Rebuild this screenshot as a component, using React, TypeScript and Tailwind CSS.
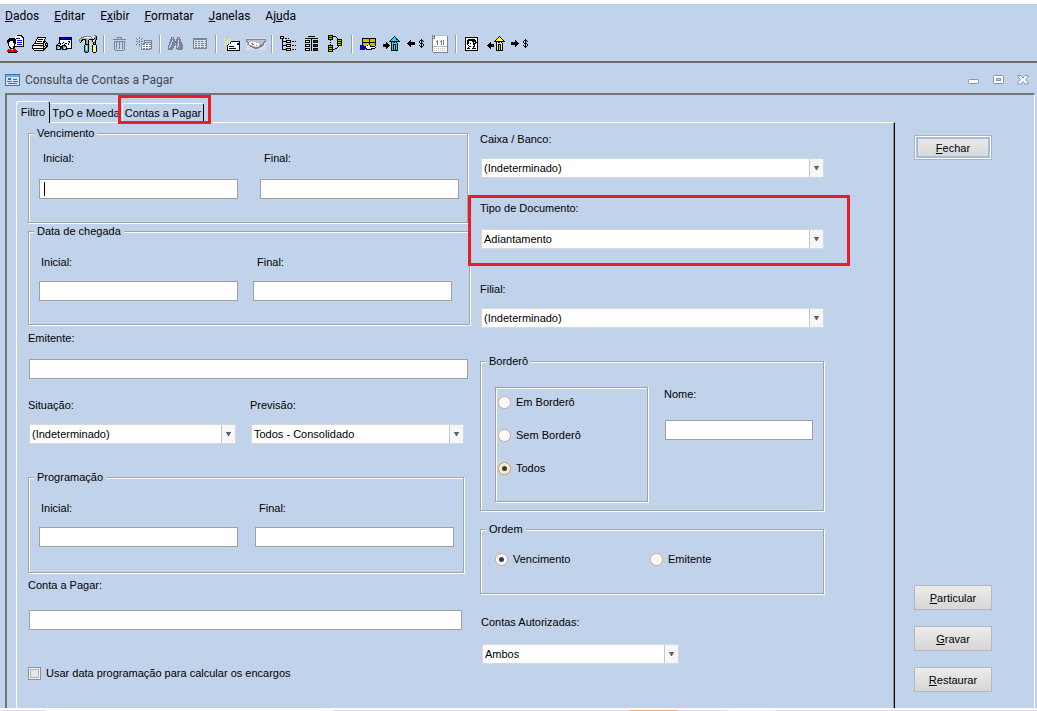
import { useState } from 'react';
import type { ReactNode } from 'react';

const palette: Record<string, string> = {
  k: '#000000',
  w: '#ffffff',
  g: '#7b8494',
  s: '#c0c0c0',
  r: '#e60000',
  m: '#a00000',
  b: '#0000e6',
  c: '#20d8e8',
  t: '#009aa0',
  y: '#ffff30',
  o: '#c8c400',
  l: '#d4deec',
};

// one character per pixel, '.' is transparent
const icons: Record<string, string[]> = {
  user: [
    '..........wkkkkk...',
    '.........wwwwwwkk..',
    '.........wwwwwwwkk.',
    '...kkkkkkwbbbbwwwk.',
    '..kkkkkkkkwwwwwwwk.',
    '.kkkkkkkkkwbbbbbwk.',
    '.kkkwwwkkkwwwwwwwk.',
    '.kkwwwwkkkwbbbbbwk.',
    '..kwwwwwkkwwwwwwwk.',
    '..kwwwwwkwwbbbbbwk.',
    '..kwwwwwkwwwwwwwwk.',
    '...kwwwkkkkkkkkkkk.',
    '...kkwwkk..........',
    '....kkkkr..........',
    '..rrrwwrrr.........',
    '.rrrrrrrrrr........',
    '.rrrrrrrrrrk.......',
    '..kkkkkkkkk........',
  ],
  printer: [
    '.....kkkkkkkkk..',
    '.....kwwwwwwwk..',
    '....kwkkkkkwk...',
    '....kwwwwwwwk...',
    '...kwkkkkkwkkk..',
    '...kwwwwwwwkkwk.',
    '..kkkkkkkkkkwkkk',
    '.kwwwwwwwwwkwkwk',
    'kkkkkkkkkkkkwkkk',
    'kwwwwwwwoowkkwkk',
    'kwwwwwwwwwwkwkk.',
    'kkkkkkkkkkkkkk..',
    '.kwwwwwwwwwkk...',
    '..kkkkkkkkkk....',
  ],
  preview: [
    '...kkkkkkkkkkkkk',
    '...kbbbbbbbbbbbk',
    '...kkkkkkkkkkkkk',
    '...kwwwwwwwwwwwk',
    '...kwwwwwwwwkkwk',
    '...kwwwkwwwwwkwk',
    '..kkkwkwwkkwkwwk',
    '.k.wkwwwkwwwkwwk',
    'kkkkwwkkkkwwwwwk',
    'kcckkkkcckkwwwwk',
    'kccwkkkccwkwwwwk',
    'kcwckkkcwckkkkkk',
    'kkkkk.kkkkk.....',
  ],
  tools: [
    '..............sgg.',
    '....gggggggg.swwgk',
    '..gggwwwwwwwgwwsgk',
    '.ggssssssssssswkgk',
    'gsskkkkgsskkkkkggk',
    'gskk..kgsk...kwwk.',
    'gsk...kgsk...kwgk.',
    '.k....kgsk....kgk.',
    '......kgsk....kgk.',
    '......kkkk....kkk.',
    '.....kccck...kyyyk',
    '.....kcwck...kywyk',
    '.....kcwck...kywyk',
    '.....kcwck...kywyk',
    '.....kcwck...kywyk',
    '.....kccck...kyyyk',
    '.....ktttk...kyyyk',
    '......kkk.....kkk.',
  ],
  trash: [
    '....ggggg....',
    '....g...g....',
    'ggggggggggggg',
    '.............',
    '.ggggggggggg.',
    '.g.g..g..g.g.',
    '.g.g..g..g.g.',
    '.g.g..g..g.g.',
    '.g.g..g..g.g.',
    '.g.g..g..g.g.',
    '.g.g..g..g.g.',
    '.g.g..g..g.g.',
    '.g.........g.',
    '..ggggggggg..',
  ],
  newRecord: [
    '...g............',
    'g..g..g.........',
    '.g...g..........',
    '...g....gggggggg',
    'gg.g.gg.g......g',
    '...g....gggggggg',
    '.g...g.gg......g',
    'g..g..gggwggwggg',
    '...g.gwwwwwwwwwg',
    '.....gwggwggwggg',
    '.....gwwwwwwwwwg',
    '.....gwggwggwggg',
    '.....gggggggggg.',
  ],
  find: [
    '...ggg...ggg....',
    '...g.g...g.g....',
    '..ggggg.ggggg...',
    '..gg.gg.gg.gg...',
    '..gg.ggggg.gg...',
    '.gg.gggggg.ggg..',
    '.gg.ggg.gg.ggg..',
    '.g..ggggg..gggg.',
    'gg.gggg.gg.gggg.',
    'g..ggg..g..gggg.',
    'g.gggg..g.ggggg.',
    'ggggg...ggggggg.',
    'ggggg....ggggg..',
  ],
  grid: [
    'gggggggggggggg',
    'gggggggggggggg',
    'gllllllllllllg',
    'glgglgglggllgg',
    'gllllllllllllg',
    'glgglgglggglgg',
    'gllllllllllllg',
    'glgglgglggglgg',
    'gllllllllllllg',
    'glgglgglggglgg',
    'gggggggggggggg',
  ],
  newCard: [
    '...o............',
    'y..y..y.........',
    '.y...y..........',
    '...y............',
    'yy.y.yykkkkkkkkk',
    '...y..kwwwwwwwwk',
    '.y...ykwwwwwwbbk',
    'y..ykwwwwwwwwbbk',
    '...kwwwwwwwwwwwk',
    '...kwkkkkkwwwwwk',
    '...kwwwwwwwwwwwk',
    '...kwkkkkkkkwwwk',
    '...kwwwwwwwwwwwk',
    '...kkkkkkkkkkkkk',
  ],
  handshake: [
    'llllllllllllllllllll',
    'gggggggggggggggggggg',
    'gssssssssssssssssssg',
    'ggssssssssssssssssgg',
    'lggwwwwwwwsssssssggl',
    'llgwwggwwwwwwssssgll',
    'lggwwwggwwwwwssgggll',
    'lllggswwwwgwwsgggsll',
    'llllgggsswwssgggslll',
    'llllllggggggggslllll',
    'llllllllggggslllllll',
    'llllllllllllllllllll',
  ],
  tree: [
    'kkkk............',
    'kyyk............',
    'kkkk.kk.k.......',
    '..k.............',
    '..k...kkkkk.....',
    '..kkkkkyyyk.kk.k',
    '..k...kkkkk.....',
    '..k.............',
    '..k...kkkkk.....',
    '..kkkkkyyyk.kk.k',
    '..k...kkkkk.....',
    '..k.............',
    '..k...kkkkk.....',
    '..kkkkkyyyk.kk.k',
    '......kkkkk.....',
  ],
  org: [
    '...kkkkkkk...',
    '.............',
    'kkkkkkkkkkkkk',
    '......k......',
    'kkkkk.k.kkkkk',
    'kyyyk.k.kmmmk',
    'kkkkk.k.kkkkk',
    '......k......',
    'kkkkk.k.kkkkk',
    'kyyyk.k.kmmmk',
    'kkkkk.k.kkkkk',
    '......k......',
    'kkkkk.k.kkkkk',
    'kyyyk.k.kmmmk',
    'kkkkk.k.kkkkk',
  ],
  cycle: [
    'kkkkk..........',
    'koookkkk.......',
    'kkkkk...k......',
    'koook....k.....',
    'kkkkk....kkkkk.',
    '..k......koook.',
    '.........kkkkk.',
    '..k......koook.',
    '.........kkkkk.',
    '..k......koook.',
    'kkkkk....kkkkk.',
    'koook.....k....',
    'kkkkk....k.....',
    'koook..kk......',
    'kkkkkkk........',
    'koook..........',
    'kkkkk..........',
  ],
  box: [
    '..kkkkkkkkkkkkkk',
    '..kooooookoooook',
    '..kooooookoooook',
    '..kooooookoooook',
    '..kkkkkkkkkkkkkk',
    '..kooooookoooook',
    '..kooooookoooook',
    'bbbboookwwkooook',
    'bbbbbkwwwwkkkkk.',
    'bbbbbkwwwwwwwwwk',
    'bbbbbkkwwwwkkkk.',
    'bbbbb.kkkkkk....',
  ],
  houseIn: [
    '...........k.....',
    '..........kck....',
    '.........kccck...',
    '........kcccckk..',
    '.......kccccccck.',
    '......kkkkkkkkkkk',
    '...k....kcbbck...',
    '...kk...kccccck..',
    'kkkkkk..kckkkck..',
    'kkkkkkk.kckckck..',
    'kkkkkk..kckckck..',
    '...kk...kckckck..',
    '...k....kckckck..',
    '........kckckck..',
    '........kkkkkkk..',
  ],
  dollarOut: [
    '..............k..',
    '...k.........kkk.',
    '..kk........k.k.k',
    '.kkkkkkk....k.k..',
    'kkkkkkkk.....kkk.',
    '.kkkkkkk......k.k',
    '..kk........k.k.k',
    '...k.........kkk.',
    '..............k..',
  ],
  calendar: [
    'g.gssssssssssss.',
    'gggwwwwwwwwwwwwg',
    'gwgwwwwwwwwwwwwg',
    'gggwwwwwwwwwwwwg',
    'gwwwwwwwwwwwwwwg',
    'gwwwwgwwwgwgwwwg',
    'gwwwggwwggwgwwwg',
    'gwwwwgwwwgwgwwwg',
    'gwwwwgwwwgwgwwwg',
    'gwwwwgwwwgwgwwwg',
    'gwwwwwwwwwwwwwwg',
    'gssssssssssssssg',
    'gwwwwwwwwwwwwwwg',
    'gwswswswswswswwg',
    'gwwwwwwwwwwwwwwg',
    'gwswswswswswswwg',
    'gwwwwwwwwwwwwwwg',
    '.ggggggggggggggg',
  ],
  portrait: [
    'kkkkkkkkkkkkk',
    'kwwwwwwwwwwwk',
    'kwwkkkkkkkwwk',
    'kwkkkkkkkkkwk',
    'kwkkwwwkkkkwk',
    'kwkkwwwwkwkkk',
    'kwkkwkwwkkkwk',
    'kwkwwwwwkkwwk',
    'kwwkwwwwwkwwk',
    'kwwwkkwwkkwwk',
    'kwwkwwwwkwwwk',
    'kwkkkwwkkkkwk',
    'kwwwwwwwwwwwk',
    'kkkkkkkkkkkkk',
  ],
  houseOut: [
    '............k.....',
    '...........kyk....',
    '..........kyyyk...',
    '.........kyyyyyk..',
    '........kyyyyyyyk.',
    '.......kkkkkkkkkkk',
    '...k.....kybbyk...',
    '..kk.....kyyyyyk..',
    '.kkkkkk..kykkkyk..',
    'kkkkkkk..kykokyk..',
    '.kkkkkk..kykokyk..',
    '..kk.....kykokyk..',
    '...k.....kykokyk..',
    '.........kykokyk..',
    '.........kkkkkkk..',
  ],
  dollarIn: [
    '..............k..',
    '....k........kkk.',
    '....kk......k.k.k',
    'kkkkkkk.....k.k..',
    'kkkkkkkk.....kkk.',
    'kkkkkkk.......k.k',
    '....kk......k.k.k',
    '....k........kkk.',
    '..............k..',
  ],
};

const toolbarGroups = [
  ['user', 'printer', 'preview', 'tools'],
  ['trash', 'newRecord'],
  ['find', 'grid'],
  ['newCard', 'handshake'],
  ['tree', 'org', 'cycle'],
  ['box', 'houseIn', 'dollarOut', 'calendar'],
  ['portrait', 'houseOut', 'dollarIn'],
];

const menus = [
  ['', 'D', 'ados'],
  ['', 'E', 'ditar'],
  ['E', 'x', 'ibir'],
  ['', 'F', 'ormatar'],
  ['', 'J', 'anelas'],
  ['Aj', 'u', 'da'],
];

// sizes are rounded up to even numbers so a centred icon stays on whole pixels
function PixelIcon({ name }: { name: string }) {
  const rows = icons[name];
  const width = rows[0].length + (rows[0].length % 2);
  const height = rows.length + (rows.length % 2);
  return (
    <svg width={width} height={height} viewBox={`0 0 ${width} ${height}`} shapeRendering="crispEdges" className="shrink-0" aria-hidden="true">
      {rows.map((row, y) =>
        row.split('').map((c, x) =>
          palette[c] ? <rect key={`${x}-${y}`} x={x} y={y} width="1" height="1" fill={palette[c]} /> : null
        )
      )}
    </svg>
  );
}

function Group({ title, className, children }: { title: string; className: string; children: ReactNode }) {
  return (
    <fieldset className={`min-w-0 border border-[#a0a5aa] shadow-[1px_1px_0_#fff,inset_1px_1px_0_#fff] ${className}`}>
      <legend className="ml-[5px] bg-[#c1d3ea] px-[3px] leading-[13px]">{title}</legend>
      {children}
    </fieldset>
  );
}

function TextField({ id, label, className = '', gap = 'mt-3', indent = '', caret = false }: {
  id: string;
  label: string;
  className?: string;
  gap?: string;
  indent?: string;
  caret?: boolean;
}) {
  return (
    <div className={`flex flex-col ${className}`}>
      <label htmlFor={id} className={`leading-[14px] ${indent}`}>{label}</label>
      <div className={`relative ${gap}`}>
        <input id={id} type="text" className="block h-5 w-full border border-[#a0a0a0] bg-white px-1 outline-none" />
        {caret && <span className="absolute top-[3px] left-[5px] h-[14px] w-px bg-black" />}
      </div>
    </div>
  );
}

function SelectField({ id, label, value, className = '', gap = 'mt-3' }: {
  id: string;
  label: string;
  value: string;
  className?: string;
  gap?: string;
}) {
  return (
    <div className={`flex flex-col ${className}`}>
      <label htmlFor={id} className="leading-[14px]">{label}</label>
      <div className={`relative ml-px ${gap}`}>
        <select id={id} defaultValue={value} className="block h-5 w-full appearance-none border border-[#d4d8dc] bg-white px-[2px] outline-none">
          <option>{value}</option>
        </select>
        <span className="pointer-events-none absolute inset-y-px right-px flex w-[14px] items-center justify-center border-l border-[#c4c8cc] bg-[#f6f7f9]">
          <svg width="5" height="4" viewBox="0 0 5 4" aria-hidden="true">
            <path d="M0 0H5V1H4.500L3 4H2L.5 1H0Z" fill="#606060" />
          </svg>
        </span>
      </div>
    </div>
  );
}

function Radio({ name, label, checked, onChange, hot = false }: {
  name: string;
  label: string;
  checked: boolean;
  onChange: () => void;
  hot?: boolean;
}) {
  const tone = hot && checked ? 'border-[#c09850] bg-[#fbe6b4]' : 'border-[#c8aaa0] bg-[#fff8f4]';
  return (
    <label className="flex h-[13px] items-center gap-[5px]">
      <span className="relative flex size-[13px]">
        <input
          type="radio"
          name={name}
          checked={checked}
          onChange={onChange}
          className={`size-[13px] appearance-none rounded-full border ${tone} shadow-[inset_0_0_0_1px_#fff]`}
        />
        {checked && <span className="pointer-events-none absolute inset-[4px] rounded-full bg-[#2c4064]" />}
      </span>
      {label}
    </label>
  );
}

function PushButton({ hotkey, rest, focused = false }: { hotkey: string; rest: string; focused?: boolean }) {
  const frame = focused
    ? 'border-[#aeb4ba] shadow-[inset_0_0_0_1px_#fff,inset_0_0_0_3px_#9fbce6]'
    : 'border-[#b4b8bc]';
  return (
    <button type="button" className={`h-[25px] w-[78px] border bg-linear-to-b from-[#ececec] to-[#d6d6d6] pt-px leading-[14px] ${frame}`}>
      <u>{hotkey}</u>{rest}
    </button>
  );
}

function WindowControls() {
  return (
    <div className="flex items-center gap-[13px]">
      <button type="button" aria-label="Minimizar">
        <svg width="12" height="10" viewBox="0 0 12 10"><rect x=".5" y="4.5" width="10" height="4" rx="1" fill="#fff" stroke="#7f96b4" /></svg>
      </button>
      <button type="button" aria-label="Restaurar janela">
        <svg width="11" height="10" viewBox="0 0 11 10">
          <rect x=".5" y=".5" width="10" height="8" rx="1" fill="#fff" stroke="#7f96b4" />
          <rect x="3.5" y="3.5" width="4" height="2" fill="#c1d3ea" stroke="#7f96b4" />
        </svg>
      </button>
      <button type="button" aria-label="Fechar janela">
        <svg width="12" height="10" viewBox="0 0 12 10">
          <path d="M1 .5H4L6 3 8 .5H11V2L8.500 4.500 11 7.500V9H8L6 6.500 4 9H1V7.500L3.500 4.500 1 2Z" fill="#fff" stroke="#7f96b4" />
        </svg>
      </button>
    </div>
  );
}

export default function App() {
  const [bordero, setBordero] = useState('Todos');
  const [ordem, setOrdem] = useState('Vencimento');

  return (
    <div className="flex min-h-screen flex-col bg-[#c1d3ea] font-['Liberation_Sans',Arial,sans-serif] text-[11px] text-black">
      {/* Menu */}
      <nav className="flex h-7 items-center gap-[15px] border-t-4 border-white pl-[5px] font-[Roboto,'Segoe_UI',sans-serif] text-[12px]">
        {menus.map(([before, key, after]) => (
          <button key={after} type="button">{before}<u>{key}</u>{after}</button>
        ))}
      </nav>

      {/* Toolbar */}
      <div className="flex h-8 items-center pl-1">
        {toolbarGroups.map((group, i) => (
          <div key={group[0]} className="flex items-center">
            {i > 0 && <span className="mr-[3px] ml-[3px] h-[18px] w-[2px] border-r border-white bg-[#a0a0a0]" />}
            {group.map((name) => (
              <button key={name} type="button" aria-label={name} className="flex h-6 w-6 items-center justify-center">
                <PixelIcon name={name} />
              </button>
            ))}
          </div>
        ))}
      </div>

      {/* Window */}
      <div className="mt-px flex flex-1 flex-col border-t-2 border-[#6c6c6c] pt-[2px]">
        <header className="flex h-7 items-center gap-[5px] pt-px pr-2 pl-[5px] font-[Roboto,'Segoe_UI',sans-serif] text-[12px] text-[#404850]">
          <svg width="15" height="12" viewBox="0 0 15 12" shapeRendering="crispEdges" aria-hidden="true">
            <rect width="15" height="12" fill="#3f74b8" />
            <rect x="1" y="1" width="13" height="2" fill="#78aae6" />
            <rect x="1" y="3" width="13" height="8" fill="#d8e6f6" />
            <path d="M3 4h3v2h-3zM2 7h5v1h-5zM8 5h4v1h-4zM8 7h5v1h-5zM3 9h9v1h-9z" fill="#3f6cae" />
          </svg>
          <h1 className="flex-1">Consulta de Contas a Pagar</h1>
          <WindowControls />
        </header>

        <div className="mr-[2px] ml-[5px] flex flex-1 border-t-2 border-r border-l-2 border-t-[#74757a] border-r-white border-l-[#74757a]">
          <main className="ml-[9px] flex flex-1 flex-col pt-[6px]">
            <div className="relative -mb-px flex items-end" role="tablist">
              <button type="button" role="tab" aria-selected="true" className="h-[22px] w-[34px] rounded-t-[3px] border border-b-0 border-white border-r-black bg-[#c1d3ea] pb-px">
                Filtro
              </button>
              <button type="button" role="tab" aria-selected="false" className="mb-px h-[19px] w-[71px] border-t border-r border-t-white border-r-black pl-[2px]">
                TpO e Moeda
              </button>
              <button type="button" role="tab" aria-selected="false" className="relative mb-px ml-px h-[19px] w-[82px] rounded-t-[2px] border border-b-0 border-white border-r-black">
                Contas a Pagar
                <span className="pointer-events-none absolute -top-[9px] -right-[8px] -bottom-[2px] -left-[5px] border-[3px] border-[#ed1c24]" />
              </button>
            </div>

            <div className="grid flex-1 grid-cols-[442fr_344fr] gap-[10px] border border-b-0 border-white border-r-black pr-[70px] pb-[28px] pl-[11px] shadow-[inset_-1px_0_0_#909498]">
              <div className="flex flex-col">
                <Group title="Vencimento" className="mt-1 mr-[2px] pb-[23px]">
                  <div className="flex gap-[22px] pt-[11px] pl-[10px]">
                    <TextField id="venc-inicial" label="Inicial:" className="w-[199px]" indent="pl-1" gap="mt-[14px]" caret />
                    <TextField id="venc-final" label="Final:" className="w-[199px]" indent="pl-1" gap="mt-[14px]" />
                  </div>
                </Group>
                <Group title="Data de chegada" className="mt-[2px] pb-[23px]">
                  <div className="flex gap-[15px] pt-[17px] pl-[10px]">
                    <TextField id="cheg-inicial" label="Inicial:" className="w-[199px]" indent="pl-[2px]" />
                    <TextField id="cheg-final" label="Final:" className="w-[199px]" indent="pl-1" />
                  </div>
                </Group>
                <TextField id="emitente" label="Emitente:" className="mt-[6px] mr-[2px]" gap="mt-[14px] ml-px" />
                <div className="mt-[19px] mr-[6px] flex gap-[14px]">
                  <SelectField id="situacao" label="Situação:" value="(Indeterminado)" className="w-[208px]" />
                  <SelectField id="previsao" label="Previsão:" value="Todos - Consolidado" className="flex-1" />
                </div>
                <Group title="Programação" className="mt-[27px] mr-[6px] pb-[25px]">
                  <div className="flex gap-[17px] pt-[17px] pl-[10px]">
                    <TextField id="prog-inicial" label="Inicial:" className="w-[199px]" indent="pl-[2px]" />
                    <TextField id="prog-final" label="Final:" className="w-[199px]" indent="pl-1" />
                  </div>
                </Group>
                <TextField id="conta" label="Conta a Pagar:" className="mt-[5px] mr-2" gap="mt-[18px] ml-px" />
                <label className="mt-9 flex h-[14px] items-center gap-[5px]">
                  <input type="checkbox" className="size-[13px] appearance-none border border-[#8e8f8f] bg-[#e4e6ea] shadow-[inset_0_0_0_1px_#f4f4f4,inset_0_0_0_2px_#b0b4b8]" />
                  Usar data programação para calcular os encargos
                </label>
              </div>

              <div className="flex flex-col">
                <SelectField id="caixa" label="Caixa / Banco:" value="(Indeterminado)" className="mt-[9px]" />
                <div className="relative mt-[23px]">
                  <SelectField id="tipo" label="Tipo de Documento:" value="Adiantamento" gap="mt-[14px]" />
                  <span className="pointer-events-none absolute -top-[6px] -right-[26px] -bottom-[17px] -left-3 border-[3px] border-[#ed1c24]" />
                </div>
                <SelectField id="filial" label="Filial:" value="(Indeterminado)" className="mt-[33px]" />
                <Group title="Borderô" className="mt-[27px] pb-2">
                  <div className="flex gap-[16px] pt-[19px] pr-[10px] pl-[14px]">
                    <div className="flex h-[115px] w-[153px] flex-col gap-5 border border-[#a0a0a0] pt-2 pl-[2px] shadow-[1px_1px_0_#fff,inset_1px_1px_0_#fff]">
                      {['Em Borderô', 'Sem Borderô', 'Todos'].map((item) => (
                        <Radio key={item} name="bordero" label={item} checked={bordero === item} onChange={() => setBordero(item)} hot />
                      ))}
                    </div>
                    <TextField id="nome" label="Nome:" className="flex-1" gap="mt-[19px] ml-px" />
                  </div>
                </Group>
                <Group title="Ordem" className="mt-3 pb-[27px]">
                  <div className="grid grid-cols-[155px_1fr] pt-[17px] pl-[14px]">
                    {['Vencimento', 'Emitente'].map((item) => (
                      <Radio key={item} name="ordem" label={item} checked={ordem === item} onChange={() => setOrdem(item)} />
                    ))}
                  </div>
                </Group>
                <SelectField id="autorizadas" label="Contas Autorizadas:" value="Ambos" className="mt-[21px] w-[199px] pl-px" gap="mt-[15px]" />
              </div>
            </div>
          </main>

          <aside className="flex w-[139px] flex-col justify-between pt-10 pb-[16px] pl-[19px]">
            <PushButton hotkey="F" rest="echar" focused />
            <div className="flex flex-col gap-4">
              <PushButton hotkey="P" rest="articular" />
              <PushButton hotkey="G" rest="ravar" />
              <PushButton hotkey="R" rest="estaurar" />
            </div>
          </aside>
        </div>
      </div>

      {/* Bottom edge of the desktop */}
      <footer className="flex h-[4px] border-t-2 border-white bg-[#e4dcee]">
        <span className="ml-[45px] w-[288px] bg-white" />
        <span className="ml-[296px] w-12 bg-[#fbb078]" />
        <span className="ml-[50px] w-12 bg-[#f4f2fa]" />
      </footer>
    </div>
  );
}
